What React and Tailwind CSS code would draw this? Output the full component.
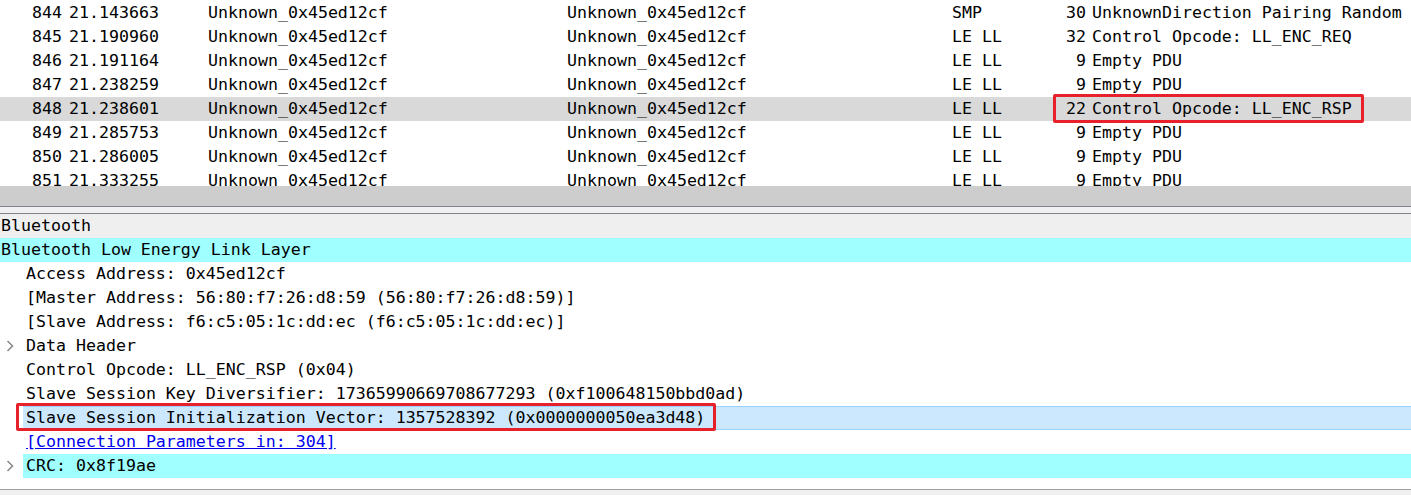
import React from "react";

const packets = [
  { no: 844, time: "21.143663", proto: "SMP", len: 30, info: "UnknownDirection Pairing Random" },
  { no: 845, time: "21.190960", proto: "LE LL", len: 32, info: "Control Opcode: LL_ENC_REQ" },
  { no: 846, time: "21.191164", proto: "LE LL", len: 9, info: "Empty PDU" },
  { no: 847, time: "21.238259", proto: "LE LL", len: 9, info: "Empty PDU" },
  { no: 848, time: "21.238601", proto: "LE LL", len: 22, info: "Control Opcode: LL_ENC_RSP", selected: true },
  { no: 849, time: "21.285753", proto: "LE LL", len: 9, info: "Empty PDU" },
  { no: 850, time: "21.286005", proto: "LE LL", len: 9, info: "Empty PDU" },
  { no: 851, time: "21.333255", proto: "LE LL", len: 9, info: "Empty PDU" },
];

const Chevron = () => (
  <svg width="8" height="12" viewBox="0 0 8 12" className="ml-[6px]">
    <polyline points="1.5,1 6.5,6 1.5,11" fill="none" stroke="#8a8a8a" strokeWidth="1.6" />
  </svg>
);

// one child line of the details tree
const Child = ({ children, chevron, className = "", boxed }) => (
  <div className="relative flex h-6 items-center">
    <div className="flex h-full w-[23px] shrink-0 items-center">{chevron && <Chevron />}</div>
    <div className={`flex h-full flex-1 items-center pl-[3px] whitespace-pre ${className}`}>{children}</div>
    {boxed && (
      <div className="pointer-events-none absolute left-[16px] top-[-3px] h-[28px] w-[700px] rounded-[2px] border-[3px] border-[#e8202b]" />
    )}
  </div>
);

export default function App() {
  return (
    <div className="h-[495px] w-[1411px] overflow-hidden bg-white text-[16.6px] leading-6 text-black [font-family:'DejaVu_Sans_Mono',monospace]">
      {/* packet list */}
      <div className="h-[186px] overflow-hidden pt-px">
        {packets.map((p) => (
          <div key={p.no} className={`relative flex h-6 items-center whitespace-pre ${p.selected ? "bg-[#d9d9d9]" : ""}`}>
            <div className="w-[62px] text-right">{p.no}</div>
            <div className="w-[146px] pl-[7px]">{p.time}</div>
            <div className="w-[359px]">Unknown_0x45ed12cf</div>
            <div className="w-[385px]">Unknown_0x45ed12cf</div>
            <div className="w-[83px]">{p.proto}</div>
            <div className="w-[51px] text-right">{p.len}</div>
            <div className="pl-[6px]">{p.info}</div>
            {p.selected && (
              <div className="pointer-events-none absolute left-[1053px] top-[-3px] h-[29px] w-[311px] rounded-[2px] border-[3px] border-[#e8202b]" />
            )}
          </div>
        ))}
      </div>

      {/* scrollbar + splitter */}
      <div className="h-[21px] border-b border-[#83838d] bg-[#cdcdcd]" />
      <div className="h-[7px] border-b border-[#83838d] bg-[#f0f0f0]" />

      {/* packet details */}
      <div className="h-[264px]">
        <div className="flex h-6 items-center bg-[#efefef] pl-px">Bluetooth</div>
        <div className="flex h-6 items-center bg-[#a0ffff] pl-px">Bluetooth Low Energy Link Layer</div>
        <Child>Access Address: 0x45ed12cf</Child>
        <Child>[Master Address: 56:80:f7:26:d8:59 (56:80:f7:26:d8:59)]</Child>
        <Child>[Slave Address: f6:c5:05:1c:dd:ec (f6:c5:05:1c:dd:ec)]</Child>
        <Child chevron>Data Header</Child>
        <Child>Control Opcode: LL_ENC_RSP (0x04)</Child>
        <Child>Slave Session Key Diversifier: 17365990669708677293 (0xf100648150bbd0ad)</Child>
        <Child boxed className="border-y border-[#99d1ff] bg-[#cce8ff]">
          Slave Session Initialization Vector: 1357528392 (0x0000000050ea3d48)
        </Child>
        <Child>
          <span className="text-[#0000ee] underline">[Connection Parameters in: 304]</span>
        </Child>
        <Child chevron className="bg-[#a0ffff]">CRC: 0x8f19ae</Child>
      </div>
      <div className="h-[12px] border-b border-[#a0a0a0]" />
      <div className="h-[5px] bg-[#f0f0f0]" />
    </div>
  );
}
